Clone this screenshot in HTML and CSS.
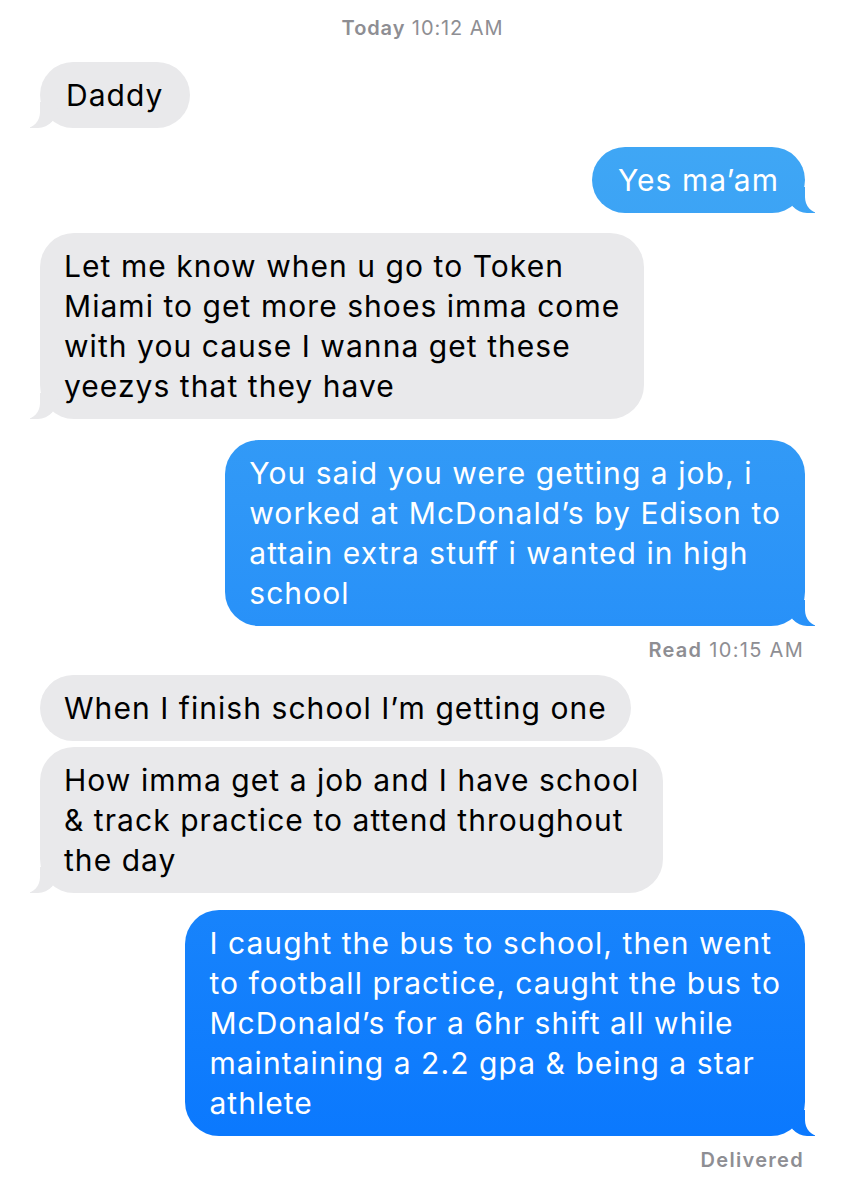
FILE: index.html
```html
<!DOCTYPE html>
<html lang="en">
<head>
<meta charset="utf-8">
<title>Messages</title>
<link rel="stylesheet" href="styles.css">
</head>
<body>
<main class="thread">
  <div class="stamp"><b>Today</b> 10:12 AM</div>

  <div class="bubble them tail t-daddy">Daddy</div>
  <div class="bubble me tail t-yes">Yes ma’am</div>
  <div class="bubble them tail t-let">Let me know when u go to Token<br>Miami to get more shoes imma come<br>with you cause I wanna get these<br>yeezys that they have</div>
  <div class="bubble me tail t-said">You said you were getting a job, i<br>worked at McDonald’s by Edison to<br>attain extra stuff i wanted in high<br>school</div>
  <div class="status t-read"><b>Read</b> 10:15 AM</div>
  <div class="bubble them t-when">When I finish school I’m getting one</div>
  <div class="bubble them tail t-how">How imma get a job and I have school<br>&amp; track practice to attend throughout<br>the day</div>
  <div class="bubble me tail t-bus">I caught the bus to school, then went<br>to football practice, caught the bus to<br>McDonald’s for a 6hr shift all while<br>maintaining a 2.2 gpa &amp; being a star<br>athlete</div>
  <div class="status t-delivered"><b>Delivered</b></div>
</main>
</body>
</html>
```

FILE: styles.css
```css
html, body {
  margin: 0;
  padding: 0;
  background: #ffffff;
}

body {
  font-family: Inter, "Noto Sans", "Liberation Sans", sans-serif;
  width: 843px;
  height: 1200px;
  overflow: hidden;
}

.thread {
  display: flex;
  flex-direction: column;
  padding: 16px 38px 0 40px;
}

.stamp {
  align-self: center;
  font-size: 20px;
  line-height: 24px;
  letter-spacing: 0.9px;
  color: #8e8e93;
}

.stamp b,
.status b {
  font-weight: 600;
}

.status {
  align-self: flex-end;
  font-size: 20px;
  line-height: 24px;
  letter-spacing: 1.3px;
  color: #8e8e93;
  margin-right: 1px;
}

.bubble {
  position: relative;
  font-size: 30px;
  line-height: 40px;
  letter-spacing: 1.05px;
  padding: 13px 24px;
  border-radius: 34px;
  white-space: nowrap;
}

.them {
  align-self: flex-start;
  background: #e9e9eb;
  color: #000000;
}

.me {
  align-self: flex-end;
  color: #ffffff;
  background: linear-gradient(180deg, #46adf4 0px, #2f97f7 500px, #0a78fe 1150px) fixed;
}

.t-daddy,
.t-yes {
  padding-left: 26px;
  padding-right: 26px;
}

.tail::before,
.tail::after {
  content: "";
  position: absolute;
  bottom: 0;
  height: 26px;
}

.them.tail::before {
  left: -10px;
  width: 28px;
  background: #e9e9eb;
  border-bottom-right-radius: 20px 22px;
}

.them.tail::after {
  left: -36px;
  width: 36px;
  background: #ffffff;
  border-bottom-right-radius: 14px 16px;
}

.me.tail::before {
  right: -10px;
  width: 28px;
  background: linear-gradient(180deg, #46adf4 0px, #2f97f7 500px, #0a78fe 1150px) fixed;
  border-bottom-left-radius: 20px 22px;
}

.me.tail::after {
  right: -36px;
  width: 36px;
  background: #ffffff;
  border-bottom-left-radius: 14px 16px;
}

.t-daddy { margin-top: 22px; }
.t-yes { margin-top: 19px; }
.t-let { margin-top: 20px; }
.t-said { margin-top: 21px; }
.t-read { margin-top: 12px; }
.t-when { margin-top: 13px; }
.t-how { margin-top: 6px; }
.t-bus { margin-top: 17px; }
.t-delivered { margin-top: 12px; }
```
